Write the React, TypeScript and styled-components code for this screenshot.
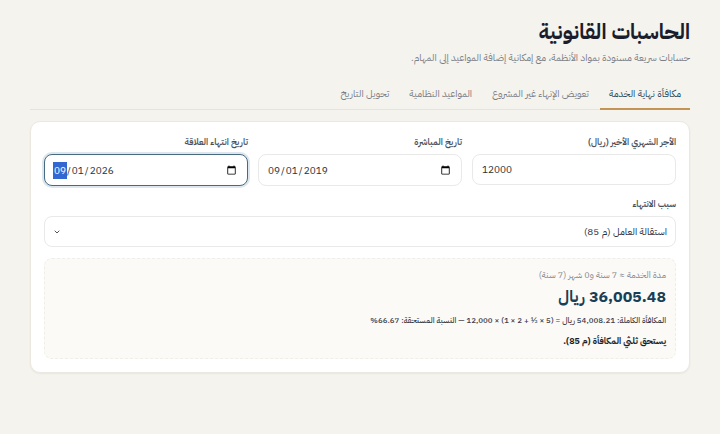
import React, { useState } from "react";
import styled, { createGlobalStyle, css } from "styled-components";

const GlobalStyle = createGlobalStyle`
  *, *::before, *::after { box-sizing: border-box; }
  body {
    margin: 0;
    background: #f5f3ee;
    color: #1a1d2b;
    font-family: "IBM Plex Sans Arabic", "Noto Sans", "DejaVu Sans", sans-serif;
  }
  button, input, select { font-family: inherit; }
`;

const Page = styled.main`
  padding: 16px 30px 24px;
`;

const Title = styled.h1`
  margin: 0;
  font-size: 21px;
  line-height: 32px;
  font-weight: 700;
`;

const Subtitle = styled.p`
  margin: 0;
  font-size: 10px;
  line-height: 20px;
  color: #7b7f86;
`;

const Tabs = styled.div`
  display: flex;
  gap: 2px;
  margin-top: 12px;
  border-bottom: 1px solid #e6e3dc;
`;

const Tab = styled.button<{ $active: boolean }>`
  height: 30px;
  margin-bottom: -1px;
  padding: 0 9px;
  border: 0;
  border-bottom: 2px solid ${(p) => (p.$active ? "#c49454" : "transparent")};
  background: none;
  color: ${(p) => (p.$active ? "#1f4b63" : "#7b7f86")};
  font-size: 10px;
  line-height: 28px;
  white-space: nowrap;
  cursor: pointer;
`;

const Card = styled.section`
  margin-top: 11px;
  padding: 13px;
  border: 1px solid #ebe8e1;
  border-radius: 10px;
  background: #fff;
  box-shadow: 0 1px 2px rgba(30, 30, 20, 0.06);
`;

const FieldRow = styled.div`
  display: grid;
  grid-template-columns: repeat(3, minmax(0, 1fr));
  align-items: start;
  gap: 10px;
  margin-bottom: 11px;
`;

const Field = styled.div`
  display: flex;
  flex-direction: column;
  gap: 4px;
`;

const Label = styled.label`
  font-size: 9px;
  line-height: 15px;
  font-weight: 600;
  color: #4b4f5a;
`;

const control = css`
  width: 100%;
  height: 31px;
  border: 1px solid #e9e9e9;
  border-radius: 8px;
  background: #fff;
  color: #2b2e38;
  font-size: 10px;
  outline: none;

  &:focus {
    border-color: #466a80;
    box-shadow: 0 0 0 2px #dde6ec;
  }
`;

const Input = styled.input`
  ${control}
  padding: 0 9px;
  direction: ltr;
  text-align: left;

  &[type="date"] {
    height: 32px;
    padding: 0 10px 0 8px;
  }
  &::-webkit-inner-spin-button { display: none; }
  &::-webkit-datetime-edit-month-field:focus {
    background: #3567cb;
    color: #fff;
  }
  &::-webkit-calendar-picker-indicator {
    width: 11px;
    height: 11px;
    padding: 0;
  }
`;

const SelectWrap = styled.div`
  display: grid;
  align-items: center;

  & > * { grid-area: 1 / 1; }
`;

const Select = styled.select`
  ${control}
  padding: 0 8px;
  appearance: none;
`;

const Chevron = styled.svg`
  width: 6px;
  height: 4px;
  justify-self: end;
  margin-inline-end: 10px;
  pointer-events: none;
`;

const Result = styled.div`
  margin-top: 11px;
  padding: 8px 9px 9px;
  border: 1px dashed #f0eee8;
  border-radius: 8px;
  background: #fbfaf6;
`;

const tones = {
  muted: css`
    font-size: 9px;
    color: #858890;
  `,
  plain: css`
    font-size: 8px;
    font-weight: 500;
    color: #3c404b;
  `,
  strong: css`
    margin-top: 5px;
    font-size: 9px;
    font-weight: 700;
    color: #1a1d2b;
  `,
};

const Line = styled.p<{ $tone: keyof typeof tones }>`
  margin: 0;
  line-height: 16px;
  ${(p) => tones[p.$tone]}
`;

const Amount = styled.p`
  margin: 0;
  font-size: 16px;
  line-height: 29px;
  font-weight: 700;
  color: #173f57;
`;

const tabs = ["مكافأة نهاية الخدمة", "تعويض الإنهاء غير المشروع", "المواعيد النظامية", "تحويل التاريخ"];

export default function App() {
  const [active, setActive] = useState(0);
  return (
    <Page dir="rtl" lang="ar">
      <GlobalStyle />
      <Title>الحاسبات القانونية</Title>
      <Subtitle>حسابات سريعة مسنودة بمواد الأنظمة، مع إمكانية إضافة المواعيد إلى المهام.</Subtitle>
      <Tabs role="tablist">
        {tabs.map((name, i) => (
          <Tab key={name} type="button" role="tab" aria-selected={i === active} $active={i === active} onClick={() => setActive(i)}>
            {name}
          </Tab>
        ))}
      </Tabs>
      <Card>
        <FieldRow>
          <Field>
            <Label htmlFor="wage">الأجر الشهري الأخير (ريال)</Label>
            <Input id="wage" type="number" defaultValue="12000" />
          </Field>
          <Field>
            <Label htmlFor="start">تاريخ المباشرة</Label>
            <Input id="start" type="date" defaultValue="2019-09-01" />
          </Field>
          <Field>
            <Label htmlFor="end">تاريخ انتهاء العلاقة</Label>
            <Input id="end" type="date" defaultValue="2026-09-01" autoFocus />
          </Field>
        </FieldRow>
        <Field>
          <Label htmlFor="reason">سبب الانتهاء</Label>
          <SelectWrap>
            <Select id="reason" defaultValue="resign">
              <option value="resign">استقالة العامل (م 85)</option>
            </Select>
            <Chevron viewBox="0 0 6 4" fill="none" stroke="#555" aria-hidden="true">
              <path d="M.7.7 3 3 5.3.7" />
            </Chevron>
          </SelectWrap>
        </Field>
        <Result>
          <Line $tone="muted">مدة الخدمة ≈ 7 سنة و0 شهر (7 سنة)</Line>
          <Amount>36,005.48 ريال</Amount>
          <Line $tone="plain">المكافأة الكاملة: 54,008.21 ريال = (5 × ½ + 2 × 1) × 12,000 — النسبة المستحقة: 66.67%</Line>
          <Line $tone="strong">يستحق ثلثي المكافأة (م 85).</Line>
        </Result>
      </Card>
    </Page>
  );
}
